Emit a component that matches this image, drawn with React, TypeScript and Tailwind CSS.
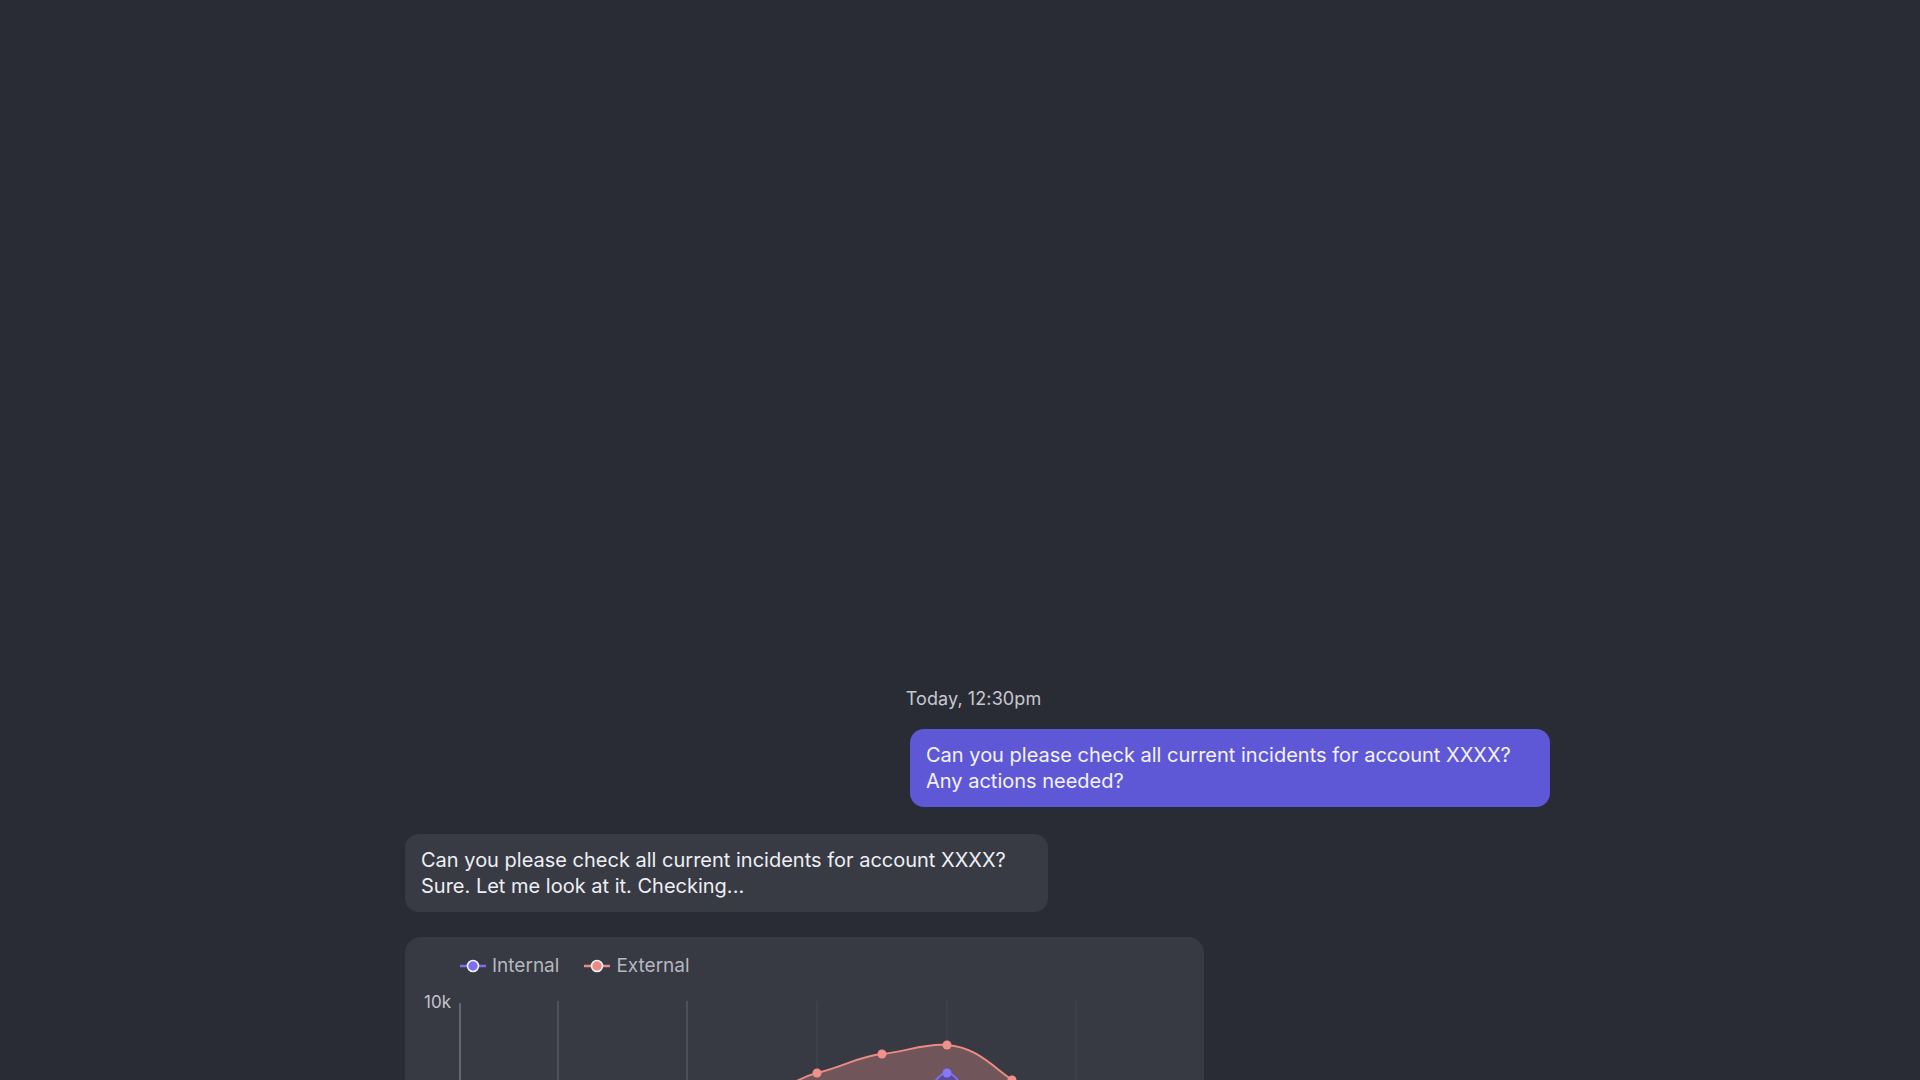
import React from "react";

function LegendIcon({ color }: { color: string }) {
  return (
    <svg width="26" height="14" viewBox="0 0 26 14" className="shrink-0">
      <line x1="0" y1="7" x2="26" y2="7" stroke={color} strokeWidth="2.5" />
      <circle cx="13" cy="7" r="5.5" fill={color} stroke="#f3f3f7" strokeWidth="1.6" />
    </svg>
  );
}

function Chart() {
  const grid = [
    { x: 153, c: "#5c5f69" },
    { x: 282, c: "#5a5d67" },
    { x: 412, c: "#42444e" },
    { x: 542, c: "#42444e" },
    { x: 671, c: "#42444e" },
  ];
  const ext =
    "M 330 150 C 360 110, 385 90, 412 83 C 440 76, 455 66, 477 64 C 500 62, 520 53, 542 55 C 570 57, 585 74, 607 90 C 625 104, 645 125, 665 150";
  const intl = "M 505 150 C 522 105, 530 83, 542 83 C 554 83, 562 105, 579 150";
  return (
    <svg width="799" height="130" viewBox="0 0 799 130" className="block">
      <text
        x="19"
        y="18"
        fill="#c3c5cc"
        fontSize="17"
        fontFamily="Inter, 'Noto Sans', sans-serif"
      >
        10k
      </text>
      {grid.map((g) => (
        <line key={g.x} x1={g.x} y1="11" x2={g.x} y2="130" stroke={g.c} strokeWidth="1.3" />
      ))}
      <line x1="55" y1="13" x2="55" y2="130" stroke="#70737d" strokeWidth="1.6" />
      <path d={`${ext} L 665 200 L 330 200 Z`} fill="#70565a" />
      <path d={ext} fill="none" stroke="#ec8b83" strokeWidth="2" />
      <path d={`${intl} L 579 200 L 505 200 Z`} fill="#5a4e8c" />
      <path d={intl} fill="none" stroke="#7b6df0" strokeWidth="2" />
      {[
        [412, 83],
        [477, 64],
        [542, 55],
        [607, 90],
      ].map(([x, y]) => (
        <circle key={x} cx={x} cy={y} r="4.5" fill="#f2918a" />
      ))}
      <circle cx="542" cy="83" r="4.5" fill="#8677ff" />
    </svg>
  );
}

export default function App() {
  return (
    <div
      className="h-screen w-full overflow-hidden bg-[#2a2c35]"
      style={{ fontFamily: "Inter, 'Noto Sans', sans-serif" }}
    >
      <div className="ml-[405px] flex w-[1145px] flex-col pt-[687px]">
        <div className="pr-[8px] text-center text-[18px] leading-6 tracking-[0.1px] text-[#c6c8cf]">Today, 12:30pm</div>
        <div className="mt-[18px] w-[640px] self-end rounded-[14px] bg-[#5e58d7] px-4 py-[13px] text-[20px] leading-[26px] text-[#f3f3f8]">
          Can you please check all current incidents for account XXXX?
          <br />
          Any actions needed?
        </div>
        <div className="mt-[27px] w-[643px] self-start rounded-[14px] bg-[#383a44] px-4 py-[13px] text-[20px] leading-[26px] text-[#eeeff3]">
          Can you please check all current incidents for account XXXX?
          <br />
          Sure. Let me look at it. Checking...
        </div>
        <div className="mt-[25px] h-[300px] w-[799px] rounded-2xl bg-[#373943]">
          <div className="flex items-center gap-[25px] pl-[55px] pt-[17px]">
            <div className="flex items-center gap-[6px]">
              <LegendIcon color="#7c6ef2" />
              <span className="text-[19px] leading-6 text-[#b5b7be]">Internal</span>
            </div>
            <div className="flex items-center gap-[6px]">
              <LegendIcon color="#ee8a82" />
              <span className="text-[19px] leading-6 text-[#b5b7be]">External</span>
            </div>
          </div>
          <div className="mt-[12px]">
            <Chart />
          </div>
        </div>
      </div>
    </div>
  );
}
